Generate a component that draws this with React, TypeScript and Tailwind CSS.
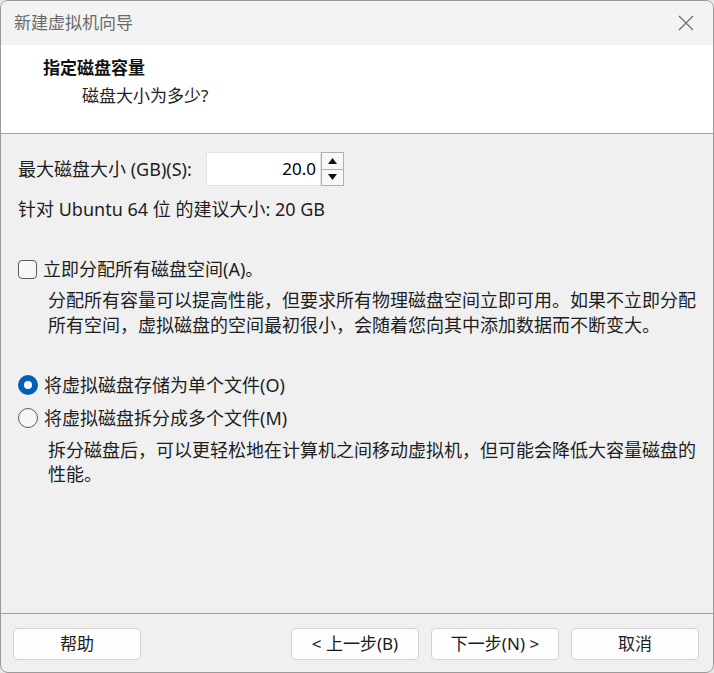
import React from 'react';

const font = { fontFamily: '"Noto Sans", "Noto Sans CJK SC", sans-serif' };

function Radio({ checked }: { checked?: boolean }) {
  return checked ? (
    <span className="flex h-[20px] w-[20px] items-center justify-center rounded-full bg-[#005fb8]">
      <span className="h-[8px] w-[8px] rounded-full bg-white" />
    </span>
  ) : (
    <span className="h-[20px] w-[20px] rounded-full border border-[#5c5c5c] bg-[#f7f7f7]" />
  );
}

function Button({ label }: { label: string }) {
  return (
    <button className="flex h-[32px] w-[128px] items-center justify-center rounded-[4px] border border-[#d2d2d2] bg-[#fdfdfd] text-[17px] text-[#1b1b1b]">
      {label}
    </button>
  );
}

export default function App() {
  return (
    <div className="h-[673px] w-[714px] bg-[#e6e6e6]" style={font}>
      <div className="flex h-full w-full flex-col overflow-hidden rounded-[8px] border border-[#9a9a9a] bg-[#f0f0f0]">
        {/* title bar */}
        <div className="flex h-[44px] shrink-0 items-center justify-between bg-[#f3f3f3] pl-[13px] pr-[18px]">
          <span className="text-[17px] text-[#6a6a6a]">新建虚拟机向导</span>
          <svg width="16" height="16" viewBox="0 0 16 16" className="mr-[1px]">
            <path d="M1 1 L15 15 M15 1 L1 15" stroke="#6a6a6a" strokeWidth="1.2" />
          </svg>
        </div>

        {/* header */}
        <div className="h-[89px] shrink-0 border-b border-[#a0a0a0] bg-white pl-[42px] pt-[10px]">
          <div className="text-[17px] font-bold leading-[26px] text-[#111]">指定磁盘容量</div>
          <div className="pl-[39px] text-[17px] leading-[30px] text-[#222]">磁盘大小为多少?</div>
        </div>

        {/* body */}
        <div className="flex flex-1 flex-col pl-[17px] pr-[14px] text-[18px] text-[#1e1e1e]">
          <div className="mt-[18px] flex h-[34px] items-center">
            <span className="w-[188px]">最大磁盘大小 (GB)(S):</span>
            <div className="flex h-[34px] w-[115px] items-center justify-end border border-[#e2e2e2] bg-white pr-[4px] text-[17px] text-black">
              20.0
            </div>
            <div className="flex h-[34px] w-[23px] flex-col border border-[#b0b0b0] bg-[#f7f7f7]">
              <div className="flex flex-1 items-center justify-center border-b border-[#b0b0b0]">
                <svg width="9" height="6" viewBox="0 0 9 6"><path d="M4.5 0 L9 6 L0 6 Z" fill="#111" /></svg>
              </div>
              <div className="flex flex-1 items-center justify-center">
                <svg width="9" height="6" viewBox="0 0 9 6"><path d="M0 0 L9 0 L4.5 6 Z" fill="#111" /></svg>
              </div>
            </div>
          </div>

          <div className="mt-[11px] leading-[25px]">针对 Ubuntu 64 位 的建议大小: 20 GB</div>

          <div className="mt-[35px] flex h-[25px] items-center gap-[6px]">
            <span className="h-[19px] w-[19px] rounded-[4px] border border-[#5c5c5c] bg-[#f7f7f7]" />
            <span>立即分配所有磁盘空间(A)。</span>
          </div>
          <div className="mt-[6px] pl-[30px] leading-[25px]">
            分配所有容量可以提高性能，但要求所有物理磁盘空间立即可用。如果不立即分配所有空间，虚拟磁盘的空间最初很小，会随着您向其中添加数据而不断变大。
          </div>

          <div className="mt-[33px] flex h-[28px] items-center gap-[6px]">
            <Radio checked />
            <span>将虚拟磁盘存储为单个文件(O)</span>
          </div>
          <div className="mt-[5px] flex h-[28px] items-center gap-[6px]">
            <Radio />
            <span>将虚拟磁盘拆分成多个文件(M)</span>
          </div>
          <div className="mt-[6px] pl-[30px] leading-[24px]">
            拆分磁盘后，可以更轻松地在计算机之间移动虚拟机，但可能会降低大容量磁盘的性能。
          </div>
        </div>

        {/* footer */}
        <div className="flex h-[59px] shrink-0 items-start border-t border-[#a0a0a0] pl-[12px] pr-[14px] pt-[14px]">
          <Button label="帮助" />
          <div className="ml-auto flex gap-[12px]">
            <Button label="< 上一步(B)" />
            <Button label="下一步(N) >" />
            <Button label="取消" />
          </div>
        </div>
      </div>
    </div>
  );
}
